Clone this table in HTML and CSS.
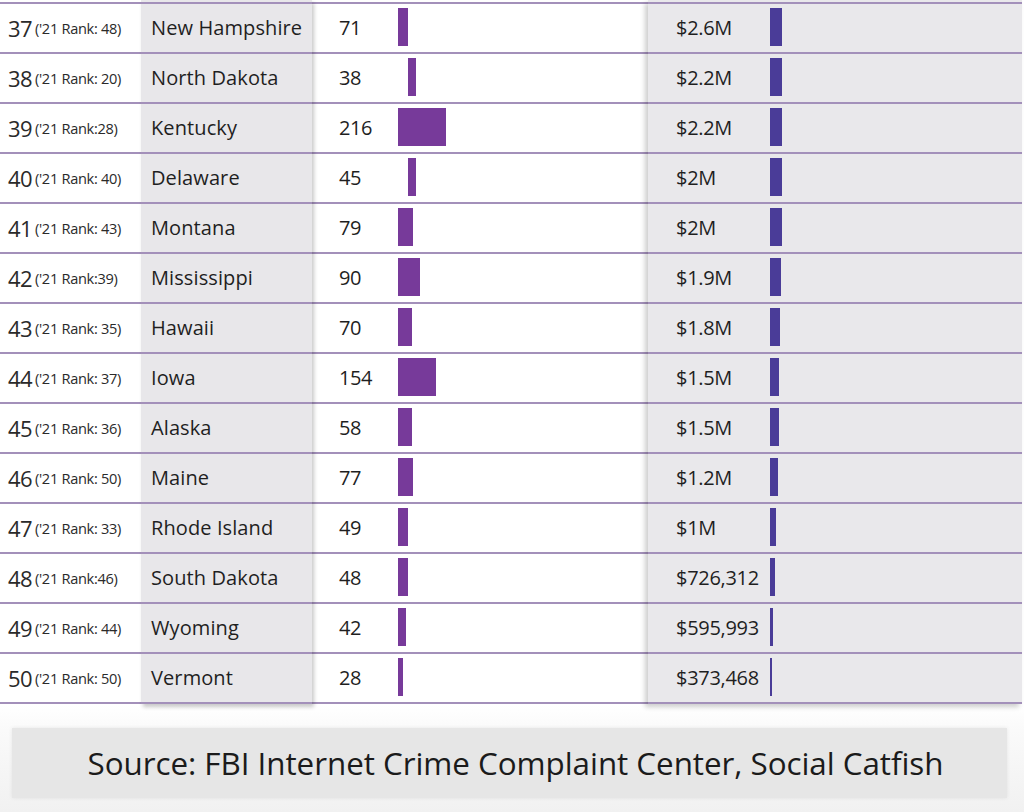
FILE: index.html
```html
<!DOCTYPE html>
<html lang="en">
<head>
<meta charset="utf-8">
<title>Internet crime by state</title>
<link rel="stylesheet" href="styles.css">
</head>
<body>
<main class="page">
  <section class="table">
    <div class="col col-rank">
      <div class="cell"><span class="rank">37</span><span class="prev">('21 Rank: 48)</span></div>
      <div class="cell"><span class="rank">38</span><span class="prev">('21 Rank: 20)</span></div>
      <div class="cell"><span class="rank">39</span><span class="prev">('21 Rank:28)</span></div>
      <div class="cell"><span class="rank">40</span><span class="prev">('21 Rank: 40)</span></div>
      <div class="cell"><span class="rank">41</span><span class="prev">('21 Rank: 43)</span></div>
      <div class="cell"><span class="rank">42</span><span class="prev">('21 Rank:39)</span></div>
      <div class="cell"><span class="rank">43</span><span class="prev">('21 Rank: 35)</span></div>
      <div class="cell"><span class="rank">44</span><span class="prev">('21 Rank: 37)</span></div>
      <div class="cell"><span class="rank">45</span><span class="prev">('21 Rank: 36)</span></div>
      <div class="cell"><span class="rank">46</span><span class="prev">('21 Rank: 50)</span></div>
      <div class="cell"><span class="rank">47</span><span class="prev">('21 Rank: 33)</span></div>
      <div class="cell"><span class="rank">48</span><span class="prev">('21 Rank:46)</span></div>
      <div class="cell"><span class="rank">49</span><span class="prev">('21 Rank: 44)</span></div>
      <div class="cell"><span class="rank">50</span><span class="prev">('21 Rank: 50)</span></div>
    </div>
    <div class="col col-state">
      <div class="cell">New Hampshire</div>
      <div class="cell">North Dakota</div>
      <div class="cell">Kentucky</div>
      <div class="cell">Delaware</div>
      <div class="cell">Montana</div>
      <div class="cell">Mississippi</div>
      <div class="cell">Hawaii</div>
      <div class="cell">Iowa</div>
      <div class="cell">Alaska</div>
      <div class="cell">Maine</div>
      <div class="cell">Rhode Island</div>
      <div class="cell">South Dakota</div>
      <div class="cell">Wyoming</div>
      <div class="cell">Vermont</div>
    </div>
    <div class="col col-count">
      <div class="cell"><span class="num">71</span><span class="bar bar-count" style="width:10px"></span></div>
      <div class="cell"><span class="num">38</span><span class="bar bar-count shift" style="width:8px"></span></div>
      <div class="cell"><span class="num">216</span><span class="bar bar-count" style="width:48px"></span></div>
      <div class="cell"><span class="num">45</span><span class="bar bar-count shift" style="width:8px"></span></div>
      <div class="cell"><span class="num">79</span><span class="bar bar-count" style="width:15px"></span></div>
      <div class="cell"><span class="num">90</span><span class="bar bar-count" style="width:22px"></span></div>
      <div class="cell"><span class="num">70</span><span class="bar bar-count" style="width:14px"></span></div>
      <div class="cell"><span class="num">154</span><span class="bar bar-count" style="width:38px"></span></div>
      <div class="cell"><span class="num">58</span><span class="bar bar-count" style="width:14px"></span></div>
      <div class="cell"><span class="num">77</span><span class="bar bar-count" style="width:15px"></span></div>
      <div class="cell"><span class="num">49</span><span class="bar bar-count" style="width:10px"></span></div>
      <div class="cell"><span class="num">48</span><span class="bar bar-count" style="width:10px"></span></div>
      <div class="cell"><span class="num">42</span><span class="bar bar-count" style="width:8px"></span></div>
      <div class="cell"><span class="num">28</span><span class="bar bar-count" style="width:5px"></span></div>
    </div>
    <div class="col col-money">
      <div class="cell"><span class="amt">$2.6M</span><span class="bar bar-money" style="width:12px"></span></div>
      <div class="cell"><span class="amt">$2.2M</span><span class="bar bar-money" style="width:12px"></span></div>
      <div class="cell"><span class="amt">$2.2M</span><span class="bar bar-money" style="width:12px"></span></div>
      <div class="cell"><span class="amt">$2M</span><span class="bar bar-money" style="width:12px"></span></div>
      <div class="cell"><span class="amt">$2M</span><span class="bar bar-money" style="width:12px"></span></div>
      <div class="cell"><span class="amt">$1.9M</span><span class="bar bar-money" style="width:11px"></span></div>
      <div class="cell"><span class="amt">$1.8M</span><span class="bar bar-money" style="width:10px"></span></div>
      <div class="cell"><span class="amt">$1.5M</span><span class="bar bar-money" style="width:9px"></span></div>
      <div class="cell"><span class="amt">$1.5M</span><span class="bar bar-money" style="width:9px"></span></div>
      <div class="cell"><span class="amt">$1.2M</span><span class="bar bar-money" style="width:8px"></span></div>
      <div class="cell"><span class="amt">$1M</span><span class="bar bar-money" style="width:6px"></span></div>
      <div class="cell"><span class="amt">$726,312</span><span class="bar bar-money" style="width:5px"></span></div>
      <div class="cell"><span class="amt">$595,993</span><span class="bar bar-money" style="width:3px"></span></div>
      <div class="cell"><span class="amt">$373,468</span><span class="bar bar-money" style="width:2px"></span></div>
    </div>
  </section>
  <footer class="source-wrap">
    <p class="source">Source: FBI Internet Crime Complaint Center, Social Catfish</p>
  </footer>
</main>
</body>
</html>
```

FILE: styles.css
```css
* { box-sizing: border-box; }
html, body { margin: 0; padding: 0; }
body {
  background: #ffffff;
  font-family: "Open Sans", "Noto Sans", sans-serif;
  color: #222222;
  width: 1024px;
  height: 812px;
  overflow: hidden;
}
.page {
  display: flex;
  flex-direction: column;
  height: 812px;
  background: linear-gradient(to bottom, #ffffff 0, #ffffff 705px, #fafafa 730px, #f1f1f1 812px);
}
.table {
  display: flex;
  width: 1022px;
}
.col {
  display: flex;
  flex-direction: column;
  padding-top: 2px;
  position: relative;
}
.cell {
  height: 50px;
  border-top: 2px solid #a390ba;
  display: flex;
  align-items: center;
  padding-bottom: 2px;
}
.cell:last-child {
  height: 52px;
  border-bottom: 2px solid #a390ba;
}
.col-rank {
  width: 141px;
}
.col-rank .cell {
  padding-left: 8px;
  padding-top: 1px;
}
.rank {
  font-size: 22px;
  color: #2a2a2a;
  letter-spacing: -0.6px;
  margin-right: 3px;
}
.prev {
  font-size: 14.6px;
  color: #2a2a2a;
  letter-spacing: -0.3px;
  padding-top: 1px;
}
.col-state {
  width: 171px;
  background: #e8e7ea;
  box-shadow: 2px 3px 4px rgba(0, 0, 0, 0.22);
  z-index: 2;
}
.col-state .cell {
  padding-left: 10px;
  font-size: 20px;
  color: #1f1f1f;
  letter-spacing: 0.1px;
}
.col-count {
  width: 336px;
  background: #ffffff;
  z-index: 1;
}
.col-count .cell {
  padding-left: 27px;
}
.num {
  width: 59px;
  font-size: 20px;
  color: #1f1f1f;
  letter-spacing: -0.4px;
}
.bar {
  display: block;
  height: 38px;
  margin-top: -1px;
}
.bar-count {
  background: #773a9a;
}
.shift {
  margin-left: 10px;
}
.col-money {
  width: 374px;
  background: #e9e8eb;
  box-shadow: -3px 3px 5px rgba(0, 0, 0, 0.2);
  z-index: 2;
}
.col-money .cell {
  padding-left: 28px;
}
.amt {
  width: 94px;
  font-size: 20px;
  color: #1f1f1f;
  letter-spacing: -0.3px;
}
.bar-money {
  background: #4a3c98;
}
.source-wrap {
  padding: 24px 17px 0 12px;
}
.source {
  margin: 0;
  height: 70px;
  background: #e6e6e6;
  box-shadow: 0 0 4px rgba(0, 0, 0, 0.08);
  display: flex;
  align-items: center;
  justify-content: center;
  font-size: 31.4px;
  color: #1b1b1b;
  padding: 0 0 2px 12px;
  letter-spacing: -0.05px;
}
```
